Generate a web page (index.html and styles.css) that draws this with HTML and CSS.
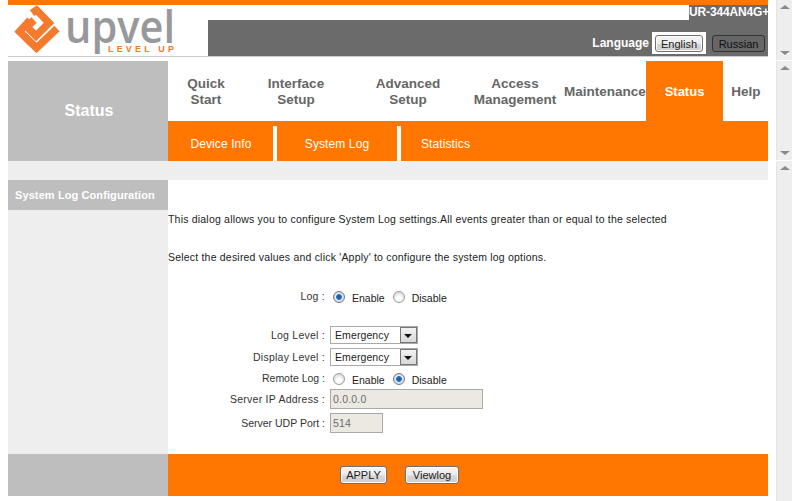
FILE: index.html
```html
<!DOCTYPE html>
<html lang="en">
<head>
<meta charset="utf-8">
<title>System Log</title>
<link rel="stylesheet" href="styles.css">
</head>
<body>
<div class="page">
  <header class="top">
    <svg class="logo" width="200" height="51" viewBox="8 5 200 51">
      <g fill="none" stroke="#f47a2e" stroke-width="7.500">
        <path d="M30 20 L19.500 31.500 L36.500 48 L57 28.500"/>
        <path d="M32 13 L36.500 10 L49 23 L36 36 L27 27 L34 20"/>
      </g>
      <text class="logo-name" x="65" y="43" textLength="110" lengthAdjust="spacingAndGlyphs">upvel</text>
      <text class="logo-tag" x="108" y="52" textLength="66">LEVEL UP</text>
    </svg>
    <div class="top-right">
      <div class="model-row"><span class="model">UR-344AN4G+</span></div>
      <div class="lang-bar">
        <span class="lang-label">Language</span>
        <span class="lang-current"><button class="btn" type="button">English</button></span>
        <button class="btn btn-dark" type="button">Russian</button>
      </div>
    </div>
  </header>

  <section class="nav">
    <div class="nav-title">Status</div>
    <div class="nav-body">
      <nav class="tabs">
        <a class="tab tab-1">Quick<br>Start</a>
        <a class="tab tab-2">Interface<br>Setup</a>
        <a class="tab tab-3">Advanced<br>Setup</a>
        <a class="tab tab-4">Access<br>Management</a>
        <a class="tab tab-5">Maintenance</a>
        <a class="tab tab-6 tab-active">Status</a>
        <a class="tab tab-7">Help</a>
      </nav>
      <div class="subtabs">
        <a class="subtab sub-1">Device Info</a>
        <a class="subtab sub-2">System Log</a>
        <a class="subtab sub-3">Statistics</a>
      </div>
    </div>
  </section>

  <div class="spacer"></div>

  <section class="content">
    <aside class="side"><h2 class="side-title">System Log Configuration</h2></aside>
    <main class="main">
      <p class="note note-1">This dialog allows you to configure System Log settings.All events greater than or equal to the selected</p>
      <p class="note note-2">Select the desired values and click 'Apply' to configure the system log options.</p>
      <form class="form">
        <div class="row row-log">
          <label class="lbl">Log :</label>
          <span class="opts">
            <input class="radio" type="radio" name="log" checked><span class="opt">Enable</span>
            <input class="radio" type="radio" name="log"><span class="opt">Disable</span>
          </span>
        </div>
        <div class="row row-level">
          <label class="lbl">Log Level :</label>
          <span class="select"><span class="select-val">Emergency</span><span class="select-arrow"></span></span>
        </div>
        <div class="row row-display">
          <label class="lbl">Display Level :</label>
          <span class="select"><span class="select-val">Emergency</span><span class="select-arrow"></span></span>
        </div>
        <div class="row row-remote">
          <label class="lbl">Remote Log :</label>
          <span class="opts">
            <input class="radio" type="radio" name="remote"><span class="opt">Enable</span>
            <input class="radio" type="radio" name="remote" checked><span class="opt">Disable</span>
          </span>
        </div>
        <div class="row row-ip">
          <label class="lbl">Server IP Address :</label>
          <input class="field field-ip" type="text" value="0.0.0.0" disabled>
        </div>
        <div class="row row-port">
          <label class="lbl">Server UDP Port :</label>
          <input class="field field-port" type="text" value="514" disabled>
        </div>
      </form>
    </main>
  </section>

  <footer class="foot">
    <div class="foot-side"></div>
    <div class="foot-main">
      <button class="btn btn-apply" type="button">APPLY</button>
      <button class="btn btn-view" type="button">Viewlog</button>
    </div>
  </footer>
</div>

<div class="scrolls">
  <div class="scroll scroll-1"><i class="up"></i><i class="down"></i></div>
  <div class="scroll scroll-2"><i class="up"></i><i class="down"></i></div>
  <div class="scroll scroll-3"><i class="up"></i></div>
</div>
</body>
</html>
```
FILE: styles.css
```css
* { box-sizing: border-box; }
html, body { margin: 0; height: 501px; overflow: hidden; background: #fff; }
body { display: flex; font-family: "Liberation Sans", Arial, sans-serif; }

.page { width: 760px; margin: 0 8px; display: flex; flex-direction: column; }

/* header */
.top { display: flex; border-top: 5px solid #ff7700; border-bottom: 1px solid #ccc; height: 57px; flex: none; }
.logo { flex: none; display: block; overflow: visible; }
.logo-name { font-family: "Open Sans", sans-serif; font-size: 46px; fill: #97989c; font-weight: 600; }
.logo-tag { font-family: "Liberation Sans", sans-serif; font-size: 9px; font-weight: 700; fill: #f47a2e; }
.top-right { flex: 1; display: flex; flex-direction: column; }
.model-row { height: 15px; display: flex; justify-content: flex-end; }
.model { width: 79px; background: #6b6b6b; color: #fff; font-weight: 700; font-size: 12px; line-height: 15px; white-space: nowrap; letter-spacing: -.15px; }
.lang-bar { flex: 1; background: #6b6b6b; display: flex; align-items: flex-end; justify-content: flex-end; padding: 0 3px 2px 0; }
.lang-label { color: #fff; font-weight: 700; font-size: 12px; line-height: 22px; margin-right: 3px; }
.lang-current { background: #fff; height: 22px; padding: 3px; margin-right: 6px; display: flex; }

.btn { font: 11px/1 "Liberation Sans", sans-serif; color: #222; height: 17px; padding: 1px 0 0; border: 1px solid #707070; border-radius: 3px; background: linear-gradient(#f6f6f6 0, #ebebeb 50%, #d6d6d6 55%, #cfcfcf 100%); box-shadow: inset 0 0 0 1px #fbfbfb; }
.lang-current .btn { width: 48px; }
.btn-dark { width: 53px; height: 17px; background: #666; border-color: #333; color: #111; box-shadow: none; margin-bottom: 2px; }

/* nav */
.nav { display: flex; height: 100px; margin-top: 4px; flex: none; }
.nav-title { width: 160px; background: #bebebe; color: #fff; font-weight: 700; font-size: 16px; line-height: 100px; text-align: center; padding-left: 2px; }
.nav-body { flex: 1; display: flex; flex-direction: column; }
.tabs { display: flex; height: 60px; }
.tab { display: flex; align-items: center; justify-content: center; text-align: center; font-weight: 700; font-size: 13.500px; line-height: 16px; color: #666; white-space: nowrap; padding-top: 2px; }
.tab-1 { width: 76px; }
.tab-2 { width: 104px; }
.tab-3 { width: 120px; }
.tab-4 { width: 94px; }
.tab-5 { width: 84px; padding-left: 2px; }
.tab-6 { width: 77px; }
.tab-7 { width: 45px; padding-left: 1px; }
.tab-active { background: #ff7700; color: #fff; font-size: 13px; }
.subtabs { height: 40px; background: #ff7700; display: flex; align-items: flex-end; }
.subtab { height: 35px; display: flex; align-items: center; justify-content: center; color: #fff; font-size: 12px; letter-spacing: .1px; }
.sub-1 { width: 105px; padding-left: 1px; }
.sub-2 { width: 120px; margin-left: 4px; }
.sub-3 { width: 89px; margin-left: 4px; }
.sub-2, .sub-3 { position: relative; }
.sub-2::before, .sub-3::before { content: ""; position: absolute; left: -4px; top: 0; bottom: 0; width: 4px; background: #fff; }

.spacer { height: 19px; background: #eee; flex: none; }

/* content */
.content { display: flex; height: 274px; flex: none; }
.side { width: 160px; background: #eee; flex: none; }
.side-title { margin: 0; height: 30px; background: #bebebe; color: #fff; font-size: 11px; line-height: 30px; font-weight: 700; padding-left: 7px; white-space: nowrap; letter-spacing: .1px; }
.main { flex: 1; font-size: 10.500px; color: #222; }
.note { margin: 0; line-height: 14px; white-space: nowrap; letter-spacing: .2px; }
.note-1 { margin-top: 32px; }
.note-2 { margin-top: 24px; }
.form { display: flex; flex-direction: column; margin-top: 23px; }
.row { display: flex; align-items: center; height: 18px; }
.lbl { width: 157px; text-align: right; margin-right: 5px; color: #333; letter-spacing: .25px; white-space: nowrap; }
.row-port .lbl, .row-remote .lbl { letter-spacing: 0; }
.row-level { margin-top: 21px; }
.row-display { margin-top: 4px; }
.row-remote { margin-top: 3px; }
.row-ip { margin-top: 2px; height: 20px; }
.row-port { margin-top: 4px; height: 20px; }

.opts { display: flex; align-items: center; padding-top: 3px; margin-left: 3px; }
.opt { margin-right: 8px; }
.radio { appearance: none; width: 12px; height: 12px; margin: 0 7px 0 0; border: 1px solid #9c9c9c; border-radius: 50%; background: radial-gradient(circle at 50% 65%, #fff 25%, #c8c8c8 100%); position: relative; top: -1px; }
.radio:checked { border-color: #6f7a87; background: radial-gradient(circle, #0f4f9a 0, #2a78c8 36%, #e8ebef 46%, #b9bfc7 100%); }

.select { display: flex; align-items: center; width: 88px; height: 18px; border: 1px solid #a9a9a9; background: #fff; justify-content: space-between; padding-left: 4px; letter-spacing: .1px; color: #222; }
.select-arrow { width: 17px; height: 16px; border: 1px solid #777; background: linear-gradient(#f2f2f2, #d8d8d8); position: relative; }
.select-arrow::after { content: ""; position: absolute; left: 3px; top: 6px; border: 4px solid transparent; border-top: 4px solid #111; border-bottom: 0; }

.field { height: 20px; border: 1px solid #a9a9a9; background: #ebe9e2; color: #6d6d6d; font: 10.500px "Liberation Sans", sans-serif; padding: 0 2px; letter-spacing: .2px; }
.field-ip { width: 153px; }
.field-port { width: 53px; }

/* footer */
.foot { display: flex; height: 42px; flex: none; }
.foot-side { width: 160px; background: #bebebe; }
.foot-main { flex: 1; background: #ff7700; display: flex; align-items: flex-start; padding: 12px 0 0 172px; }
.btn-apply { width: 47px; height: 18px; }
.btn-view { width: 54px; height: 18px; margin-left: 18px; }

/* scrollbars */
.scrolls { width: 16px; flex: none; display: flex; flex-direction: column; gap: 1px; }
.scroll { background: #eee; position: relative; border-left: 1px solid #e4e4e4; }
.scroll-1 { height: 60px; }
.scroll-2 { height: 99px; }
.scroll-3 { flex: 1; }
.up, .down { position: absolute; left: 3px; border: 4px solid transparent; border-left-width: 5px; border-right-width: 5px; }
.up { top: 5px; border-top: 0; border-bottom: 4px solid #8a8a8a; }
.down { bottom: 5px; border-bottom: 0; border-top: 4px solid #8a8a8a; }
```
